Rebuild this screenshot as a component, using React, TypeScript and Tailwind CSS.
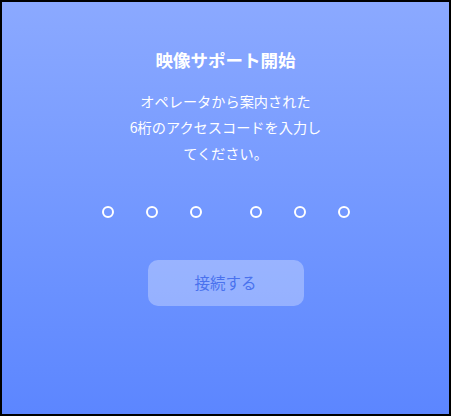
const Dot = () => (
  <span className="block h-3 w-3 rounded-full border-2 border-white" />
);

const App = () => {
  return (
    <div
      className="h-[416px] w-[451px] border-2 border-black bg-gradient-to-b from-[#8ba9ff] to-[#5c86ff] text-white"
      style={{ fontFamily: '"Noto Sans CJK JP", "Noto Sans", sans-serif' }}
    >
      <div className="flex flex-col items-center pt-[45px]">
        <h1 className="text-[17.5px] font-bold leading-[26px]">映像サポート開始</h1>

        <p className="mt-[15px] text-center text-[14.2px] leading-[26px]">
          オペレータから案内された
          <br />
          6桁のアクセスコードを入力し
          <br />
          てください。
        </p>

        <div className="mt-[40px] flex items-center">
          <div className="flex gap-[32px]">
            <Dot />
            <Dot />
            <Dot />
          </div>
          <div className="ml-[48px] flex gap-[32px]">
            <Dot />
            <Dot />
            <Dot />
          </div>
        </div>

        <button
          type="button"
          className="mt-[42px] h-[46px] w-[156px] rounded-[10px] bg-white/30 text-[15.5px] text-[#4a72ee]"
        >
          接続する
        </button>
      </div>
    </div>
  );
};

export default App;
